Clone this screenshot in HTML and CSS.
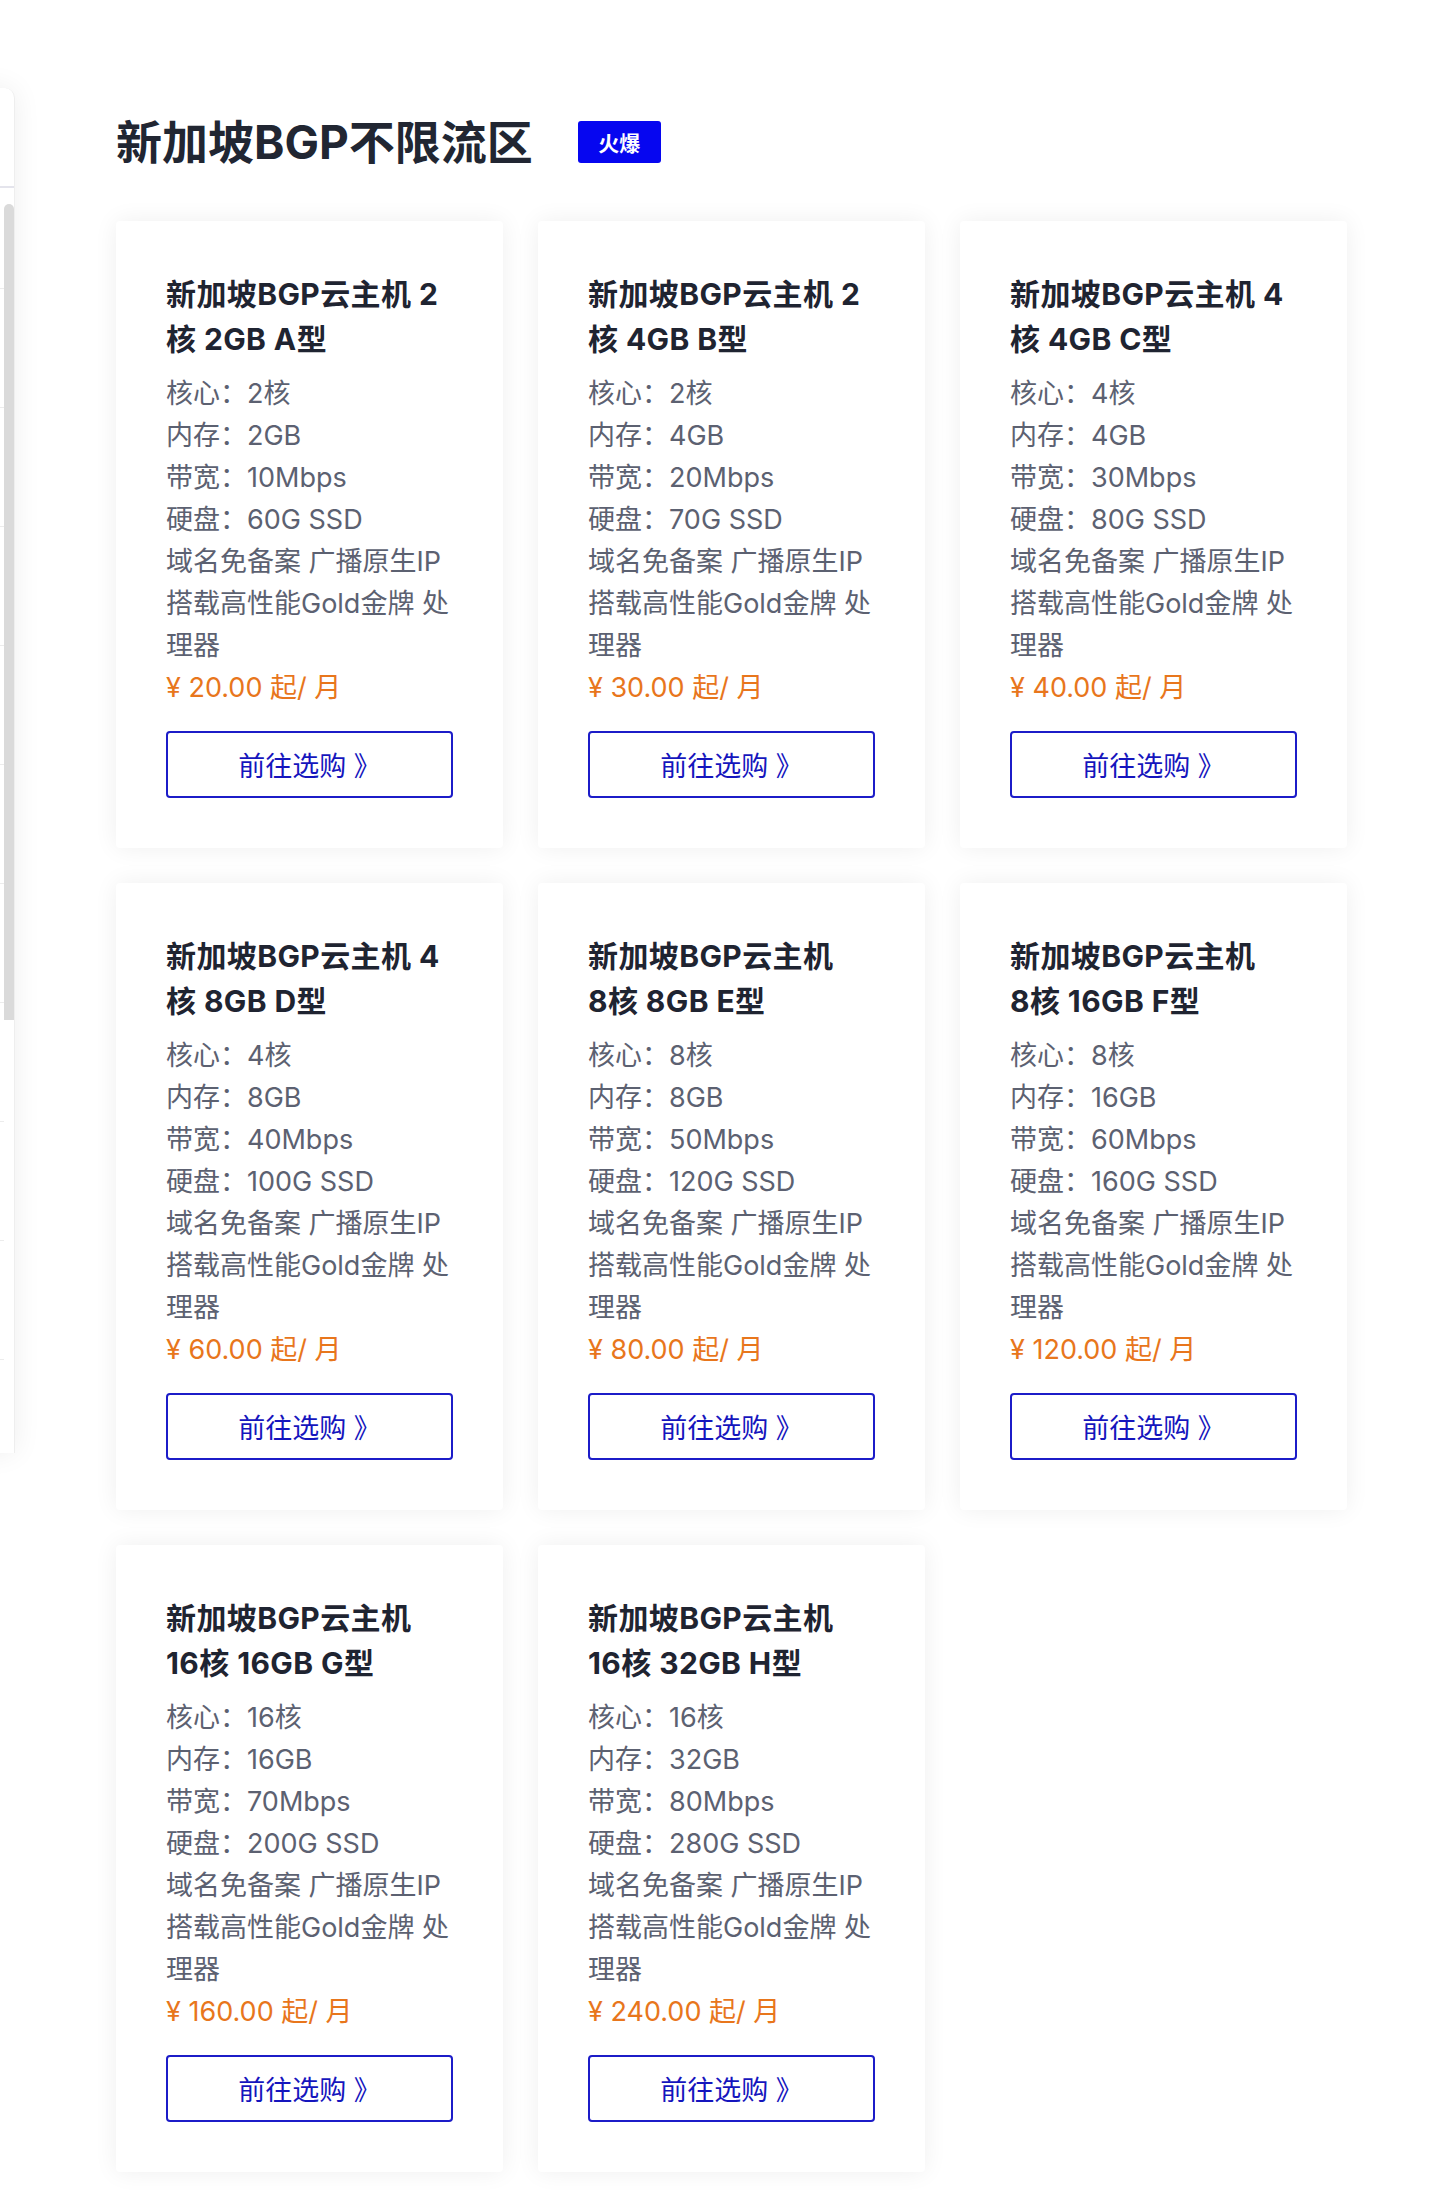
FILE: index.html
```html
<!DOCTYPE html>
<html lang="zh-CN">
<head>
<meta charset="utf-8">
<title>新加坡BGP不限流区</title>
<link rel="stylesheet" href="styles.css">
</head>
<body>
<aside class="side-panel">
  <div class="side-line"></div>
  <div class="side-thumb"></div>
  <div class="side-ticks">
    <i></i><i></i><i></i><i></i><i></i><i></i><i></i><i></i><i></i><i></i>
  </div>
</aside>

<main class="zone">
  <div class="zone-head">
    <h2 class="zone-title">新加坡BGP不限流区</h2>
    <span class="badge">火爆</span>
  </div>

  <div class="grid">
    <div class="card">
      <h3 class="card-title">新加坡BGP云主机 2核 2GB A型</h3>
      <ul class="specs">
        <li>核心：2核</li>
        <li>内存：2GB</li>
        <li>带宽：10Mbps</li>
        <li>硬盘：60G SSD</li>
        <li>域名免备案 广播原生IP</li>
        <li>搭载高性能Gold金牌 处理器</li>
      </ul>
      <div class="price">¥ 20.00 起/ 月</div>
      <a class="buy" href="#">前往选购 》</a>
    </div>

    <div class="card">
      <h3 class="card-title">新加坡BGP云主机 2核 4GB B型</h3>
      <ul class="specs">
        <li>核心：2核</li>
        <li>内存：4GB</li>
        <li>带宽：20Mbps</li>
        <li>硬盘：70G SSD</li>
        <li>域名免备案 广播原生IP</li>
        <li>搭载高性能Gold金牌 处理器</li>
      </ul>
      <div class="price">¥ 30.00 起/ 月</div>
      <a class="buy" href="#">前往选购 》</a>
    </div>

    <div class="card">
      <h3 class="card-title">新加坡BGP云主机 4核 4GB C型</h3>
      <ul class="specs">
        <li>核心：4核</li>
        <li>内存：4GB</li>
        <li>带宽：30Mbps</li>
        <li>硬盘：80G SSD</li>
        <li>域名免备案 广播原生IP</li>
        <li>搭载高性能Gold金牌 处理器</li>
      </ul>
      <div class="price">¥ 40.00 起/ 月</div>
      <a class="buy" href="#">前往选购 》</a>
    </div>

    <div class="card">
      <h3 class="card-title">新加坡BGP云主机 4核 8GB D型</h3>
      <ul class="specs">
        <li>核心：4核</li>
        <li>内存：8GB</li>
        <li>带宽：40Mbps</li>
        <li>硬盘：100G SSD</li>
        <li>域名免备案 广播原生IP</li>
        <li>搭载高性能Gold金牌 处理器</li>
      </ul>
      <div class="price">¥ 60.00 起/ 月</div>
      <a class="buy" href="#">前往选购 》</a>
    </div>

    <div class="card">
      <h3 class="card-title">新加坡BGP云主机 <span class="nw">8核</span> 8GB E型</h3>
      <ul class="specs">
        <li>核心：8核</li>
        <li>内存：8GB</li>
        <li>带宽：50Mbps</li>
        <li>硬盘：120G SSD</li>
        <li>域名免备案 广播原生IP</li>
        <li>搭载高性能Gold金牌 处理器</li>
      </ul>
      <div class="price">¥ 80.00 起/ 月</div>
      <a class="buy" href="#">前往选购 》</a>
    </div>

    <div class="card">
      <h3 class="card-title">新加坡BGP云主机 <span class="nw">8核</span> 16GB F型</h3>
      <ul class="specs">
        <li>核心：8核</li>
        <li>内存：16GB</li>
        <li>带宽：60Mbps</li>
        <li>硬盘：160G SSD</li>
        <li>域名免备案 广播原生IP</li>
        <li>搭载高性能Gold金牌 处理器</li>
      </ul>
      <div class="price">¥ 120.00 起/ 月</div>
      <a class="buy" href="#">前往选购 》</a>
    </div>

    <div class="card">
      <h3 class="card-title">新加坡BGP云主机 <span class="nw">16核</span> 16GB G型</h3>
      <ul class="specs">
        <li>核心：16核</li>
        <li>内存：16GB</li>
        <li>带宽：70Mbps</li>
        <li>硬盘：200G SSD</li>
        <li>域名免备案 广播原生IP</li>
        <li>搭载高性能Gold金牌 处理器</li>
      </ul>
      <div class="price">¥ 160.00 起/ 月</div>
      <a class="buy" href="#">前往选购 》</a>
    </div>

    <div class="card">
      <h3 class="card-title">新加坡BGP云主机 <span class="nw">16核</span> 32GB H型</h3>
      <ul class="specs">
        <li>核心：16核</li>
        <li>内存：32GB</li>
        <li>带宽：80Mbps</li>
        <li>硬盘：280G SSD</li>
        <li>域名免备案 广播原生IP</li>
        <li>搭载高性能Gold金牌 处理器</li>
      </ul>
      <div class="price">¥ 240.00 起/ 月</div>
      <a class="buy" href="#">前往选购 》</a>
    </div>
  </div>
</main>
</body>
</html>
```

FILE: styles.css
```css
* { box-sizing: border-box; }

html, body {
  margin: 0;
  padding: 0;
  background: #ffffff;
}

body {
  font-family: Inter, "Noto Sans CJK SC", sans-serif;
  color: #222632;
  min-height: 2190px;
  position: relative;
  overflow: hidden;
}

/* cropped side panel on the left edge */
.side-panel {
  position: absolute;
  left: -300px;
  top: 88px;
  width: 315px;
  height: 1365px;
  background: #ffffff;
  border-right: 1px solid #eeeeee;
  border-radius: 0 10px 0 0;
  box-shadow: 0 0 28px rgba(0, 0, 0, 0.07);
}

.side-line {
  position: absolute;
  left: 0;
  right: 0;
  top: 98px;
  height: 2px;
  background: #e4e4ec;
}

.side-thumb {
  position: absolute;
  right: 0;
  top: 116px;
  width: 10px;
  height: 816px;
  background: #dadada;
  border-radius: 5px 5px 0 0;
}

.side-ticks {
  position: absolute;
  left: 300px;
  top: 200px;
  display: flex;
  flex-direction: column;
  gap: 118px;
}

.side-ticks i {
  display: block;
  width: 4px;
  height: 1px;
  background: #ececec;
}

/* main zone */
.zone {
  padding: 110px 0 0 116px;
}

.zone-head {
  display: flex;
  align-items: center;
  height: 64px;
}

.zone-title {
  margin: 0;
  font-size: 46px;
  line-height: 64px;
  font-weight: 700;
  color: #212632;
}

.badge {
  margin-left: 45px;
  width: 83px;
  height: 42px;
  display: flex;
  align-items: center;
  justify-content: center;
  background: #0606f0;
  color: #ffffff;
  font-size: 21px;
  font-weight: 700;
  border-radius: 3px;
}

.grid {
  margin-top: 47px;
  display: grid;
  grid-template-columns: repeat(3, 387px);
  gap: 35px;
}

.card {
  background: #ffffff;
  border-radius: 4px;
  padding: 51px 50px 50px;
  box-shadow: 0 0 24px rgba(0, 0, 0, 0.065);
}

.card-title {
  margin: 0 0 11px;
  font-size: 30px;
  line-height: 45px;
  letter-spacing: 0.4px;
  font-weight: 700;
  color: #1f2431;
}

.nw { white-space: nowrap; }

.specs {
  list-style: none;
  margin: 0;
  padding: 0;
  font-size: 27px;
  line-height: 42px;
  color: #5c6171;
}

.price {
  font-size: 27px;
  line-height: 42px;
  color: #e8761c;
  margin-bottom: 22px;
}

.buy {
  display: flex;
  align-items: center;
  justify-content: center;
  height: 67px;
  border: 2px solid #1c1cc8;
  border-radius: 4px;
  color: #1515bd;
  font-size: 27px;
  text-decoration: none;
}
```
